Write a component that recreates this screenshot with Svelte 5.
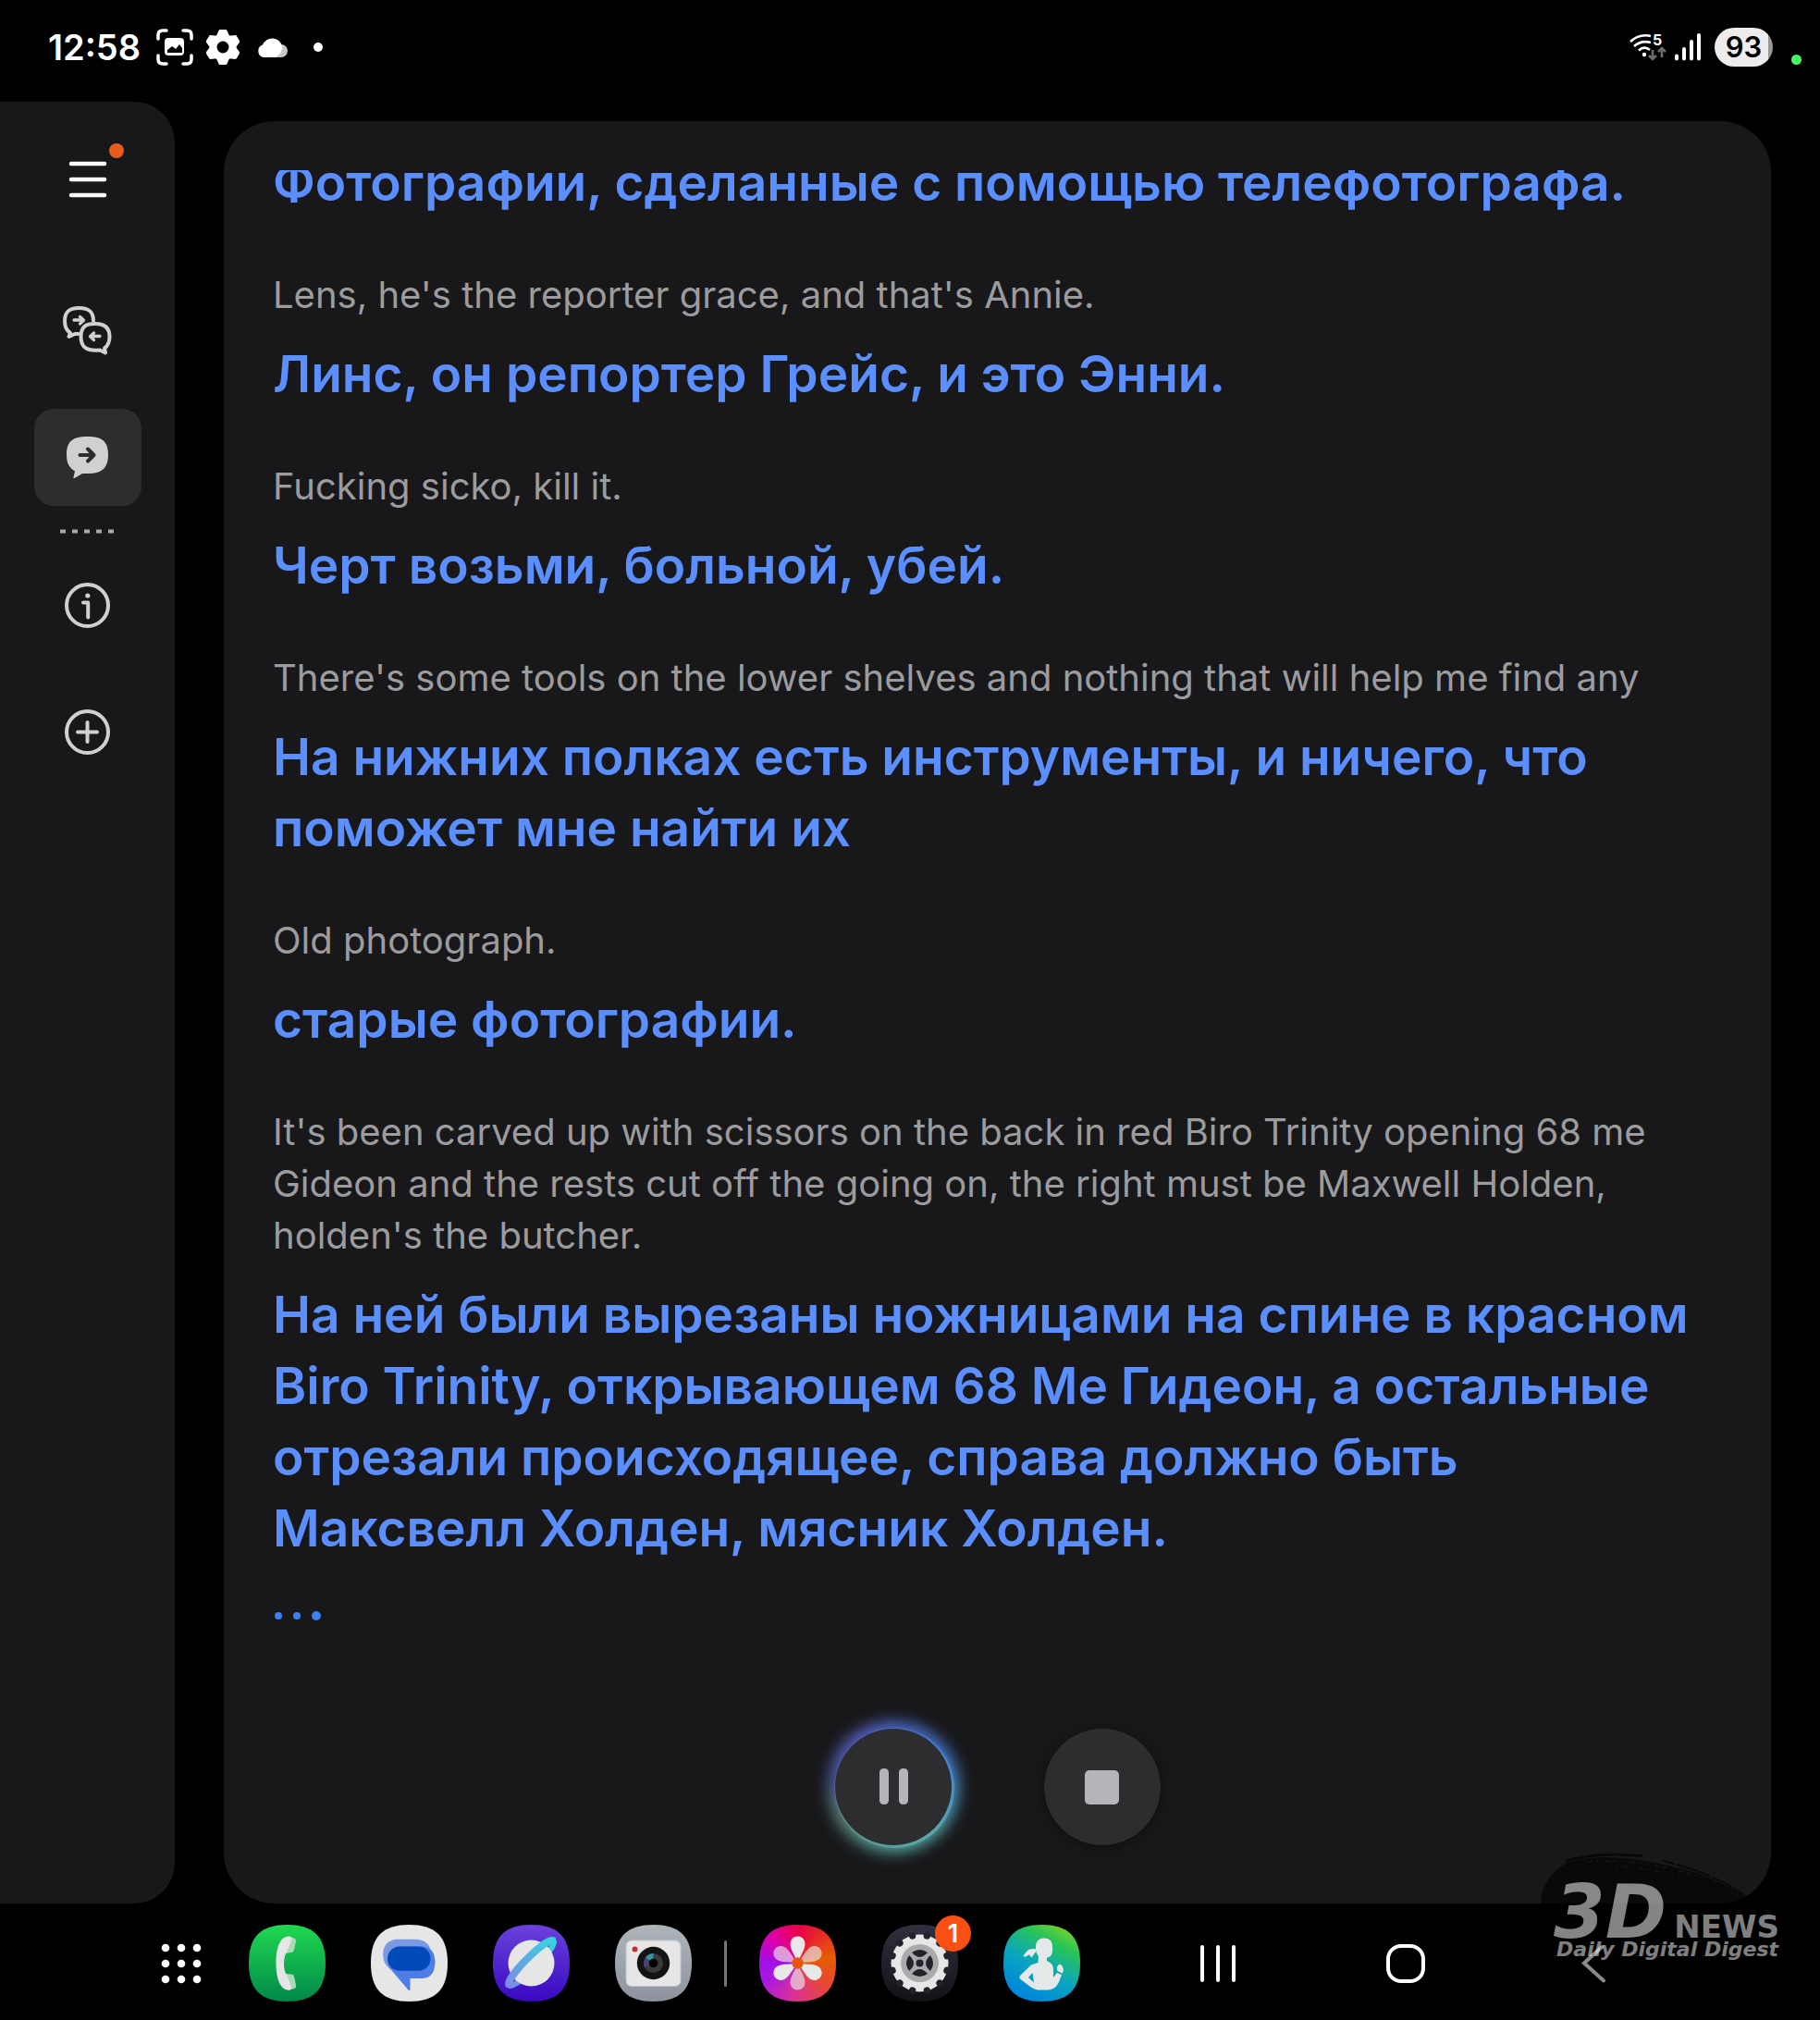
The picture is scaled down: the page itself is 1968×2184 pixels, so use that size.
<script>
  const lines = [
    { source: '', result: 'Фотографии, сделанные с помощью телефотографа.' },
    { source: "Lens, he's the reporter grace, and that's Annie.", result: 'Линс, он репортер Грейс, и это Энни.' },
    { source: 'Fucking sicko, kill it.', result: 'Черт возьми, больной, убей.' },
    { source: "There's some tools on the lower shelves and nothing that will help me find any", result: 'На нижних полках есть инструменты, и ничего, что поможет мне найти их' },
    { source: 'Old photograph.', result: 'старые фотографии.' },
    {
      source: "It's been carved up with scissors on the back in red Biro Trinity opening 68 me Gideon and the rests cut off the going on, the right must be Maxwell Holden, holden's the butcher.",
      result: 'На ней были вырезаны ножницами на спине в красном Biro Trinity, открывающем 68 Ме Гидеон, а остальные отрезали происходящее, справа должно быть Максвелл Холден, мясник Холден.'
    }
  ];
  const squircle = 'M41.5 0C70 0 83 13 83 41.5S70 83 41.5 83 0 70 0 41.5 13 0 41.5 0Z';
  const petal = 'M0 0C-2-7-8-14-8-21A8 8 0 0 1 8-21C8-14 2-7 0 0Z';
  const teeth = Array.from({ length: 12 }, (_, i) => 15 + i * 30);
  const cogs = [0, 60, 120, 180, 240, 300];
</script>

<div class="screen">
  <header class="status">
    <time>12:58</time>
    <svg class="s-shot" width="40" height="40" viewBox="0 0 40 40" aria-hidden="true">
      <path d="M2 11V7Q2 2 7 2h4M29 2h4q5 0 5 5v4M38 29v4q0 5-5 5h-4M11 38H7q-5 0-5-5v-4" fill="none" stroke="#fff" stroke-width="3.5" stroke-linecap="round" />
      <rect x="9" y="10" width="21" height="19" rx="4" fill="#fff" />
      <path d="M12 26v-3l5-4 4 3 4-5 3 4v5Z" fill="#000" />
    </svg>
    <svg class="s-gear" width="40" height="40" viewBox="-20 -20 40 40" aria-hidden="true">
      {#each cogs as a}
        <path d="M-8-10L-4.500-18Q-4-19-3-19H3Q4-19 4.500-18L8-10Z" fill="#fff" transform="rotate({a})" />
      {/each}
      <circle r="10.500" fill="none" stroke="#fff" stroke-width="8" />
    </svg>
    <svg class="s-cloud" width="33" height="23" viewBox="0 0 33 23" aria-hidden="true">
      <path d="M18 22h8a7 7 0 0 0 0-14h-3Z" fill="#c8c8c8" />
      <path d="M7 22a7 7 0 0 1-1-13.500A11 11 0 0 1 27 10Q28 17 20 22Z" fill="#fff" />
    </svg>
    <span class="more"></span>
    <span class="spacer"></span>
    <svg class="s-wifi" width="40" height="30" viewBox="0 0 40 30" aria-hidden="true">
      <g fill="none" stroke="#fff" stroke-width="2.700">
        <path d="M1 9Q11 0 23 3" />
        <path d="M5 14Q13 7 23 10" />
        <path d="M10 18.500Q16 13 22 18" />
      </g>
      <circle cx="16" cy="23" r="2.200" fill="#fff" />
      <text x="25" y="13" class="band">5</text>
      <path d="M25 18v10M21 24l4 4 4-4M35 26V16M31 20l4-4 4 4" fill="none" stroke="#6c6c6c" stroke-width="2.600" />
    </svg>
    <svg class="s-signal" width="28" height="30" viewBox="0 0 28 30" aria-hidden="true">
      <path d="M2 24.500v3M10 17v10.500M18 9v18.500M26 2v25.500" stroke="#fff" stroke-width="4" stroke-linecap="round" />
    </svg>
    <span class="battery">93</span>
    <span class="privacy"></span>
  </header>

  <div class="body">
    <nav class="rail">
      <button class="menu" aria-label="Menu">
        <svg width="42" height="40" viewBox="0 0 42 40">
          <path d="M3 3h36M3 20h36M3 37h36" stroke="#fafafa" stroke-width="4.500" stroke-linecap="round" />
        </svg>
        <span class="new"></span>
      </button>
      <button aria-label="Conversation">
        <svg width="53" height="53" viewBox="0 0 53 53" fill="none" stroke="#d0d0d2" stroke-width="4" stroke-linejoin="round" stroke-linecap="round">
          <path d="M33 16C33 6 28 2 17.500 2S2 6 2 16C2 22 3.500 26 8 29L6.500 33 13 30H16.500" />
          <path d="M35 19C45 19 50.500 23 50.500 33C50.500 39 48.500 43 45 45.500L46 50.500 40 47.500C25 49 19.500 44 19.500 33S25 19 35 19Z" />
          <path d="M12 15h10M18.500 11.500l4 3.800-4 3.800M40 32.500H30M33.500 29l-4 3.800 4 3.800" stroke-width="3.300" />
        </svg>
      </button>
      <button class="active" aria-label="Listening">
        <svg width="45" height="45" viewBox="0 0 45 45">
          <path d="M22.500 0C38 0 45 5 45 19.500C45 34 38 40 24 40H17L8.500 45Q7 45.500 7.500 44L9 37.500C2 33 0 28 0 19.500C0 5 7 0 22.500 0Z" fill="#d0d0d2" />
          <path d="M14.500 20h15M23 13.500l6.500 6.500-6.500 6.500" fill="none" stroke="#2c2c2e" stroke-width="4" stroke-linecap="round" stroke-linejoin="round" />
        </svg>
      </button>
      <svg class="divider" width="60" height="5" viewBox="0 0 60 5" aria-hidden="true">
        <path d="M0 2.500h58" stroke="#a9a9ab" stroke-width="4" stroke-dasharray="6 7" />
      </svg>
      <button aria-label="Information">
        <svg width="49" height="49" viewBox="0 0 49 49" fill="none" stroke="#d0d0d2" stroke-width="4" stroke-linecap="round" stroke-linejoin="round">
          <circle cx="24.500" cy="24.500" r="22.500" />
          <path d="M20 21.500h5.200V37.500" />
          <circle cx="24.800" cy="14" r="2.600" fill="#d0d0d2" stroke="none" />
        </svg>
      </button>
      <button aria-label="Add">
        <svg width="49" height="49" viewBox="0 0 49 49" fill="none" stroke="#d0d0d2" stroke-width="4" stroke-linecap="round">
          <circle cx="24.500" cy="24.500" r="22.500" />
          <path d="M14 24.500h21M24.500 14v21" />
        </svg>
      </button>
    </nav>

    <main class="panel">
      <div class="transcript">
        {#each lines as line}
          <section class="entry">
            {#if line.source}<p class="source">{line.source}</p>{/if}
            <p class="result">{line.result}</p>
          </section>
        {/each}
        <div class="typing"><span></span><span></span><span class="big"></span></div>
      </div>
      <div class="controls">
        <div class="halo">
          <button aria-label="Pause">
            <svg width="32" height="40" viewBox="0 0 32 40" fill="#b5b4b9">
              <rect x="1" width="10" height="39" rx="4.500" /><rect x="22" width="10" height="39" rx="4.500" />
            </svg>
          </button>
        </div>
        <button class="stop" aria-label="Stop">
          <svg width="37" height="37" viewBox="0 0 37 37"><rect width="37" height="37" rx="5" fill="#b5b4b9" /></svg>
        </button>
      </div>
    </main>
  </div>

  <footer class="dock">
    <button class="apps" aria-label="All apps">
      <svg width="44" height="44" viewBox="0 0 44 44" fill="#fff">
        {#each [5, 22, 39] as y}{#each [5, 22, 39] as x}<circle cx={x} cy={y} r="4.300" />{/each}{/each}
      </svg>
    </button>

    <div class="group">
      <button aria-label="Phone">
        <svg width="83" height="83" viewBox="0 0 83 83">
          <defs><linearGradient id="phone" x2="0" y2="1"><stop stop-color="#20d850" /><stop offset="1" stop-color="#00884a" /></linearGradient></defs>
          <path d={squircle} fill="url(#phone)" />
          <path d="M43 13l5 1Q51.500 15 51 18L49 27Q48.500 30 46 30L39.500 31ZM39.500 53L46 53.500Q48.500 53.500 49 56L51 65Q51.500 69 48 69.500L43 70.500Z" fill="#a8dcb4" />
          <path d="M44 12.500C33 12 29.500 27 29.500 41.500S33 71 44 70.700Q46.500 70 46 67L41 54C37 50 37 34 41 30L46.500 16Q47 13 44 12.500Z" fill="#e6e6e6" />
        </svg>
      </button>
      <button aria-label="Messages">
        <svg width="83" height="83" viewBox="0 0 83 83">
          <path d={squircle} fill="#e6e6e6" />
          <path d="M29 15.700H49Q65 17 65 32Q63 50 50 50H24Q13 44 13 32Q14 16 29 15.700Z" fill="#7b9ae6" />
          <path d="M31 23.500H57Q69 25 69.500 40Q69 57.500 56 58H42.500V70Q42 72 40.500 70.500L23 50Q18 44 18 38Z" fill="#4f7de3" />
          <rect x="18" y="23.500" width="46.500" height="26.300" rx="13" fill="#004ab9" />
        </svg>
      </button>
      <button aria-label="Internet">
        <svg width="83" height="83" viewBox="0 0 83 83">
          <defs>
            <linearGradient id="net" x2="0" y2="1"><stop stop-color="#6a42dc" /><stop offset="1" stop-color="#3809c0" /></linearGradient>
            <linearGradient id="ring" gradientUnits="userSpaceOnUse" x1="-34" y1="0" x2="34" y2="1"><stop stop-color="#7a8ce8" /><stop offset="1" stop-color="#38d4dc" /></linearGradient>
          </defs>
          <path d={squircle} fill="url(#net)" />
          <g transform="translate(41.500 41.500) rotate(-45)">
            <ellipse rx="34" ry="6.500" fill="none" stroke="url(#ring)" stroke-width="6" />
            <circle r="25" fill="#e6e6e6" />
            <path d="M-34 0A34 6.500 0 0 1 34 0" fill="none" stroke="url(#ring)" stroke-width="8" />
          </g>
        </svg>
      </button>
      <button aria-label="Camera">
        <svg width="83" height="83" viewBox="0 0 83 83">
          <defs><linearGradient id="cam" x2="0" y2="1"><stop stop-color="#adb5b9" /><stop offset="1" stop-color="#8e929e" /></linearGradient></defs>
          <path d={squircle} fill="url(#cam)" />
          <rect x="12" y="17" width="59" height="49.500" rx="6" fill="#e6e6e6" stroke="#c4c8cc" />
          <circle cx="21.500" cy="26.500" r="3" fill="#c4302c" />
          <circle cx="41.500" cy="41.500" r="17.700" fill="#141416" />
          <circle cx="41.500" cy="41.500" r="10.500" fill="#3b3b3e" />
          <path d="M41.500 41.500V31A10.500 10.500 0 0 0 33 35.500Z" fill="#2b9aa4" />
          <path d="M41.500 41.500L33 35.500A10.500 10.500 0 0 0 32 46Z" fill="#4b4470" />
          <circle cx="41.500" cy="41.500" r="4.800" fill="#000" />
        </svg>
      </button>
    </div>

    <span class="bar"></span>

    <div class="group">
      <button class="gallery" aria-label="Gallery">
        <svg width="83" height="83" viewBox="0 0 83 83">
          <g transform="translate(41.500 41.500)" fill="#e8e8e8">
            {#each cogs as a, i}<path d={petal} transform="rotate({a})" opacity={i % 2 ? 0.66 : 1} />{/each}
            <circle r="6.200" fill="#e8560c" />
          </g>
        </svg>
      </button>
      <button class="settings" aria-label="Settings">
        <svg width="83" height="83" viewBox="0 0 83 83">
          <defs><linearGradient id="set" x2="0" y2="1"><stop stop-color="#30303f" /><stop offset="1" stop-color="#121217" /></linearGradient></defs>
          <path d={squircle} fill="url(#set)" />
          <g transform="translate(41.500 41.500)">
            <circle r="31" fill="#e6e6e6" />
            {#each teeth as a}<circle cy="-30.500" r="3.700" fill="#22222c" transform="rotate({a})" />{/each}
            <circle r="20.500" fill="#aaaaad" />
            {#each [0, 90, 180, 270] as a}
              <path d="M-8.500-11.500Q0-17.500 8.500-11.500Q4-6.500 0-6.500T-8.500-11.500Z" fill="#22222c" transform="rotate({a})" />
            {/each}
            <circle r="4" fill="#22222c" />
          </g>
        </svg>
        <span class="count">1</span>
      </button>
      <button aria-label="Health">
        <svg width="83" height="83" viewBox="0 0 83 83">
          <defs>
            <linearGradient id="health" x1="0.300" y1="1" x2="0.850" y2="0"><stop offset="0.050" stop-color="#0088d8" /><stop offset="0.400" stop-color="#0aa4c0" /><stop offset="0.750" stop-color="#28c458" /><stop offset="1" stop-color="#86d420" /></linearGradient>
          </defs>
          <path d={squircle} fill="url(#health)" />
          <g fill="#e6e9e9">
            <path d="M44 14.500C50 14.500 53 18 53 24C53.500 31 52 35 47 35.500V39Q54 42 54 48V57L58 52 63 54 60 62Q56 70 49 70.500H37Q33 70 29 67L18 58.500Q16.500 57 18 55L30 43.500 37.500 41 38 34Q34.500 30 35 24C35 18 38 14.500 44 14.500ZM31.500 52L27 57 33 62.500Z" fill-rule="evenodd" />
            <path d="M34.500 26Q28 25.500 26 28L21.500 33.500Q22.500 35.500 25 34L27.500 32.500Q29 33 30.500 35.500L35.500 28.500Z" />
            <path d="M59 44Q62 41 64 45.500Q66 50 63.500 52.500L58.500 50Q57 46 59 44Z" />
          </g>
        </svg>
      </button>
    </div>

    <div class="keys">
      <button aria-label="Recents">
        <svg width="40" height="40" viewBox="0 0 40 40"><path d="M3 2v36M20 2v36M37 2v36" stroke="#fff" stroke-width="4" stroke-linecap="round" /></svg>
      </button>
      <button aria-label="Home">
        <svg width="42" height="42" viewBox="0 0 42 42"><rect x="2" y="2" width="38" height="38" rx="14" fill="none" stroke="#fff" stroke-width="4" /></svg>
      </button>
      <button aria-label="Back">
        <svg width="26" height="42" viewBox="0 0 26 42"><path d="M22 3L3 20.500 24 39.500" fill="none" stroke="#8a8a8a" stroke-width="4" stroke-linecap="round" /></svg>
      </button>
    </div>
  </footer>

  <svg class="mark" width="300" height="184" viewBox="0 0 300 184" role="img" aria-label="3DNews Daily Digital Digest">
    <g fill="none" stroke="#000" stroke-linecap="round" opacity="0.600">
      <path d="M19 60C16 46 24 28 46 14Q96-2 190 26 230 42 262 64V80H22Z" fill="#000" stroke="none" />
      <path d="M46 12Q80 2 130 7" stroke-width="3" stroke-dasharray="18 3 9 2" />
      <path d="M150 12Q210 26 248 56" stroke-width="2" stroke-dasharray="12 4 22 3" />
    </g>
    <g fill="none" stroke="#131314" stroke-width="2" stroke-linecap="round">
      <path d="M70 13Q130 9 190 29" stroke-dasharray="3 6 1 8 5 4" />
      <path d="M100 18Q140 20 176 30" stroke-dasharray="1 7 3 6" />
    </g>
    <g class="mark-text">
      <text class="three" x="32" y="95">3D</text>
      <text class="news" x="276" y="95" text-anchor="end">NEWS</text>
      <text class="tag" x="275" y="115" text-anchor="end">Daily Digital Digest</text>
    </g>
  </svg>
</div>

<style>
  :global(body) { background: #000; }
  .screen {
    position: relative;
    display: flex;
    flex-direction: column;
    height: 100vh;
    overflow: hidden;
    background: #000;
    color: #fff;
    font-family: Inter, Roboto, sans-serif;
  }
  svg { display: block; flex: none; }
  p { margin: 0; }
  button {
    display: flex;
    align-items: center;
    justify-content: center;
    padding: 0;
    border: 0;
    background: none;
    color: inherit;
    font: inherit;
    cursor: pointer;
  }

  .status {
    display: flex;
    align-items: center;
    flex: none;
    height: 102px;
    padding: 0 20px 8px 52px;
  }
  time { font-size: 38px; font-weight: 600; line-height: 40px; }
  .s-shot { margin-left: 17px; }
  .s-gear { margin-left: 12px; }
  .s-cloud { margin-left: 17px; }
  .more { width: 10px; height: 10px; margin-left: 28px; border-radius: 50%; background: #fff; }
  .spacer { flex: 1; }
  .s-wifi { overflow: visible; }
  .band { fill: #fff; font-size: 16px; font-weight: 700; }
  .s-signal { margin-left: 9px; }
  .battery {
    width: 63px;
    margin-left: 15px;
    border-radius: 21px;
    background: linear-gradient(90deg, #ececec 58px, #999 58px);
    color: #000;
    font-size: 31px;
    font-weight: 600;
    line-height: 42px;
    text-align: center;
  }
  .privacy { width: 11px; height: 11px; margin: 27px 0 0 20px; border-radius: 50%; background: #48fa60; }

  .body { display: flex; flex: 1; min-height: 0; }
  .rail {
    display: flex;
    flex-direction: column;
    align-items: center;
    flex: none;
    gap: 32px;
    width: 189px;
    box-sizing: border-box;
    padding-top: 31px;
    border-radius: 0 44px 44px 0;
    background: #18181a;
  }
  .rail button { position: relative; flex: none; width: 116px; height: 105px; border-radius: 21px; }
  .rail .menu { margin-bottom: 27px; }
  .rail .active { background: #2d2d2f; }
  .divider { margin: -7px 0; }
  .new { position: absolute; top: 14px; right: 19px; width: 16px; height: 16px; border-radius: 50%; background: #e55c1b; }

  .panel {
    display: flex;
    flex-direction: column;
    flex: 1;
    min-width: 0;
    box-sizing: border-box;
    margin: 21px 53px 0;
    padding: 53px 53px 63px;
    border-radius: 55px;
    background: #18181a;
  }
  .transcript {
    display: flex;
    flex-direction: column;
    justify-content: flex-end;
    flex: 1;
    gap: 55px;
    min-height: 0;
    overflow: hidden;
  }
  .entry { display: flex; flex-direction: column; gap: 19px; }
  .source { color: #9c9c9f; font-size: 40px; line-height: 56px; }
  .result { color: #5b8fff; font-size: 55px; font-weight: 600; line-height: 77px; }
  .typing { display: flex; align-items: center; gap: 12px; height: 10px; margin-top: -4px; padding-left: 2px; }
  .typing span { width: 8px; height: 8px; border-radius: 50%; background: #3f7ff5; }
  .typing .big { width: 10px; height: 10px; }

  .controls { display: flex; justify-content: center; flex: none; gap: 100px; margin-top: 117px; }
  .controls button { width: 126px; height: 126px; border-radius: 50%; background: #2d2d2f; }
  .controls .stop { box-shadow: 0 2px 14px #0006; }
  .halo { position: relative; isolation: isolate; }
  .halo::before, .halo::after {
    content: '';
    position: absolute;
    z-index: -1;
    inset: -8px;
    border-radius: 50%;
    background: conic-gradient(#4a68c8, #4577d0 50deg, #4a90c4 90deg, #58a8a8 140deg, #58a09c 190deg, #5c8478 240deg, #48569a 280deg, #5860c4 320deg, #4a68c8);
    filter: blur(8px);
  }
  .halo::after { inset: -1px -3px -3px -1px; filter: none; }

  .dock {
    display: flex;
    align-items: center;
    flex: none;
    height: 126px;
    box-sizing: border-box;
    padding: 3px 144px 0 174px;
  }
  .apps { margin-right: 51px; }
  .group { display: flex; gap: 49px; }
  .group button { position: relative; width: 83px; height: 83px; }
  .bar { width: 3px; height: 50px; margin: 0 35px; border-radius: 2px; background: #777; }
  .gallery::before {
    content: '';
    position: absolute;
    inset: 0;
    background: conic-gradient(#e8004a, #e82030 30deg, #e65c00 80deg, #e84638 130deg, #d8309a 190deg, #a818e0 240deg, #a010ea 270deg, #dc00a8 315deg, #e8004a);
    clip-path: path('M41.5 0C70 0 83 13 83 41.5S70 83 41.5 83 0 70 0 41.5 13 0 41.5 0Z');
  }
  .gallery svg { position: relative; }
  .count {
    position: absolute;
    top: -10px;
    right: -14px;
    width: 39px;
    border-radius: 50%;
    background: #fa5014;
    font-size: 27px;
    font-weight: 600;
    line-height: 39px;
    text-align: center;
  }
  .keys { display: flex; margin-left: auto; }
  .keys button { width: 203px; height: 83px; }

  .mark { position: absolute; right: 20px; bottom: 0; pointer-events: none; }
  .mark-text { fill: #ffffff84; font-family: 'DejaVu Sans', sans-serif; font-weight: 700; }
  .three { font-size: 80px; font-style: italic; }
  .news { font-size: 34px; }
  .tag { font-size: 22px; font-style: italic; }
</style>
